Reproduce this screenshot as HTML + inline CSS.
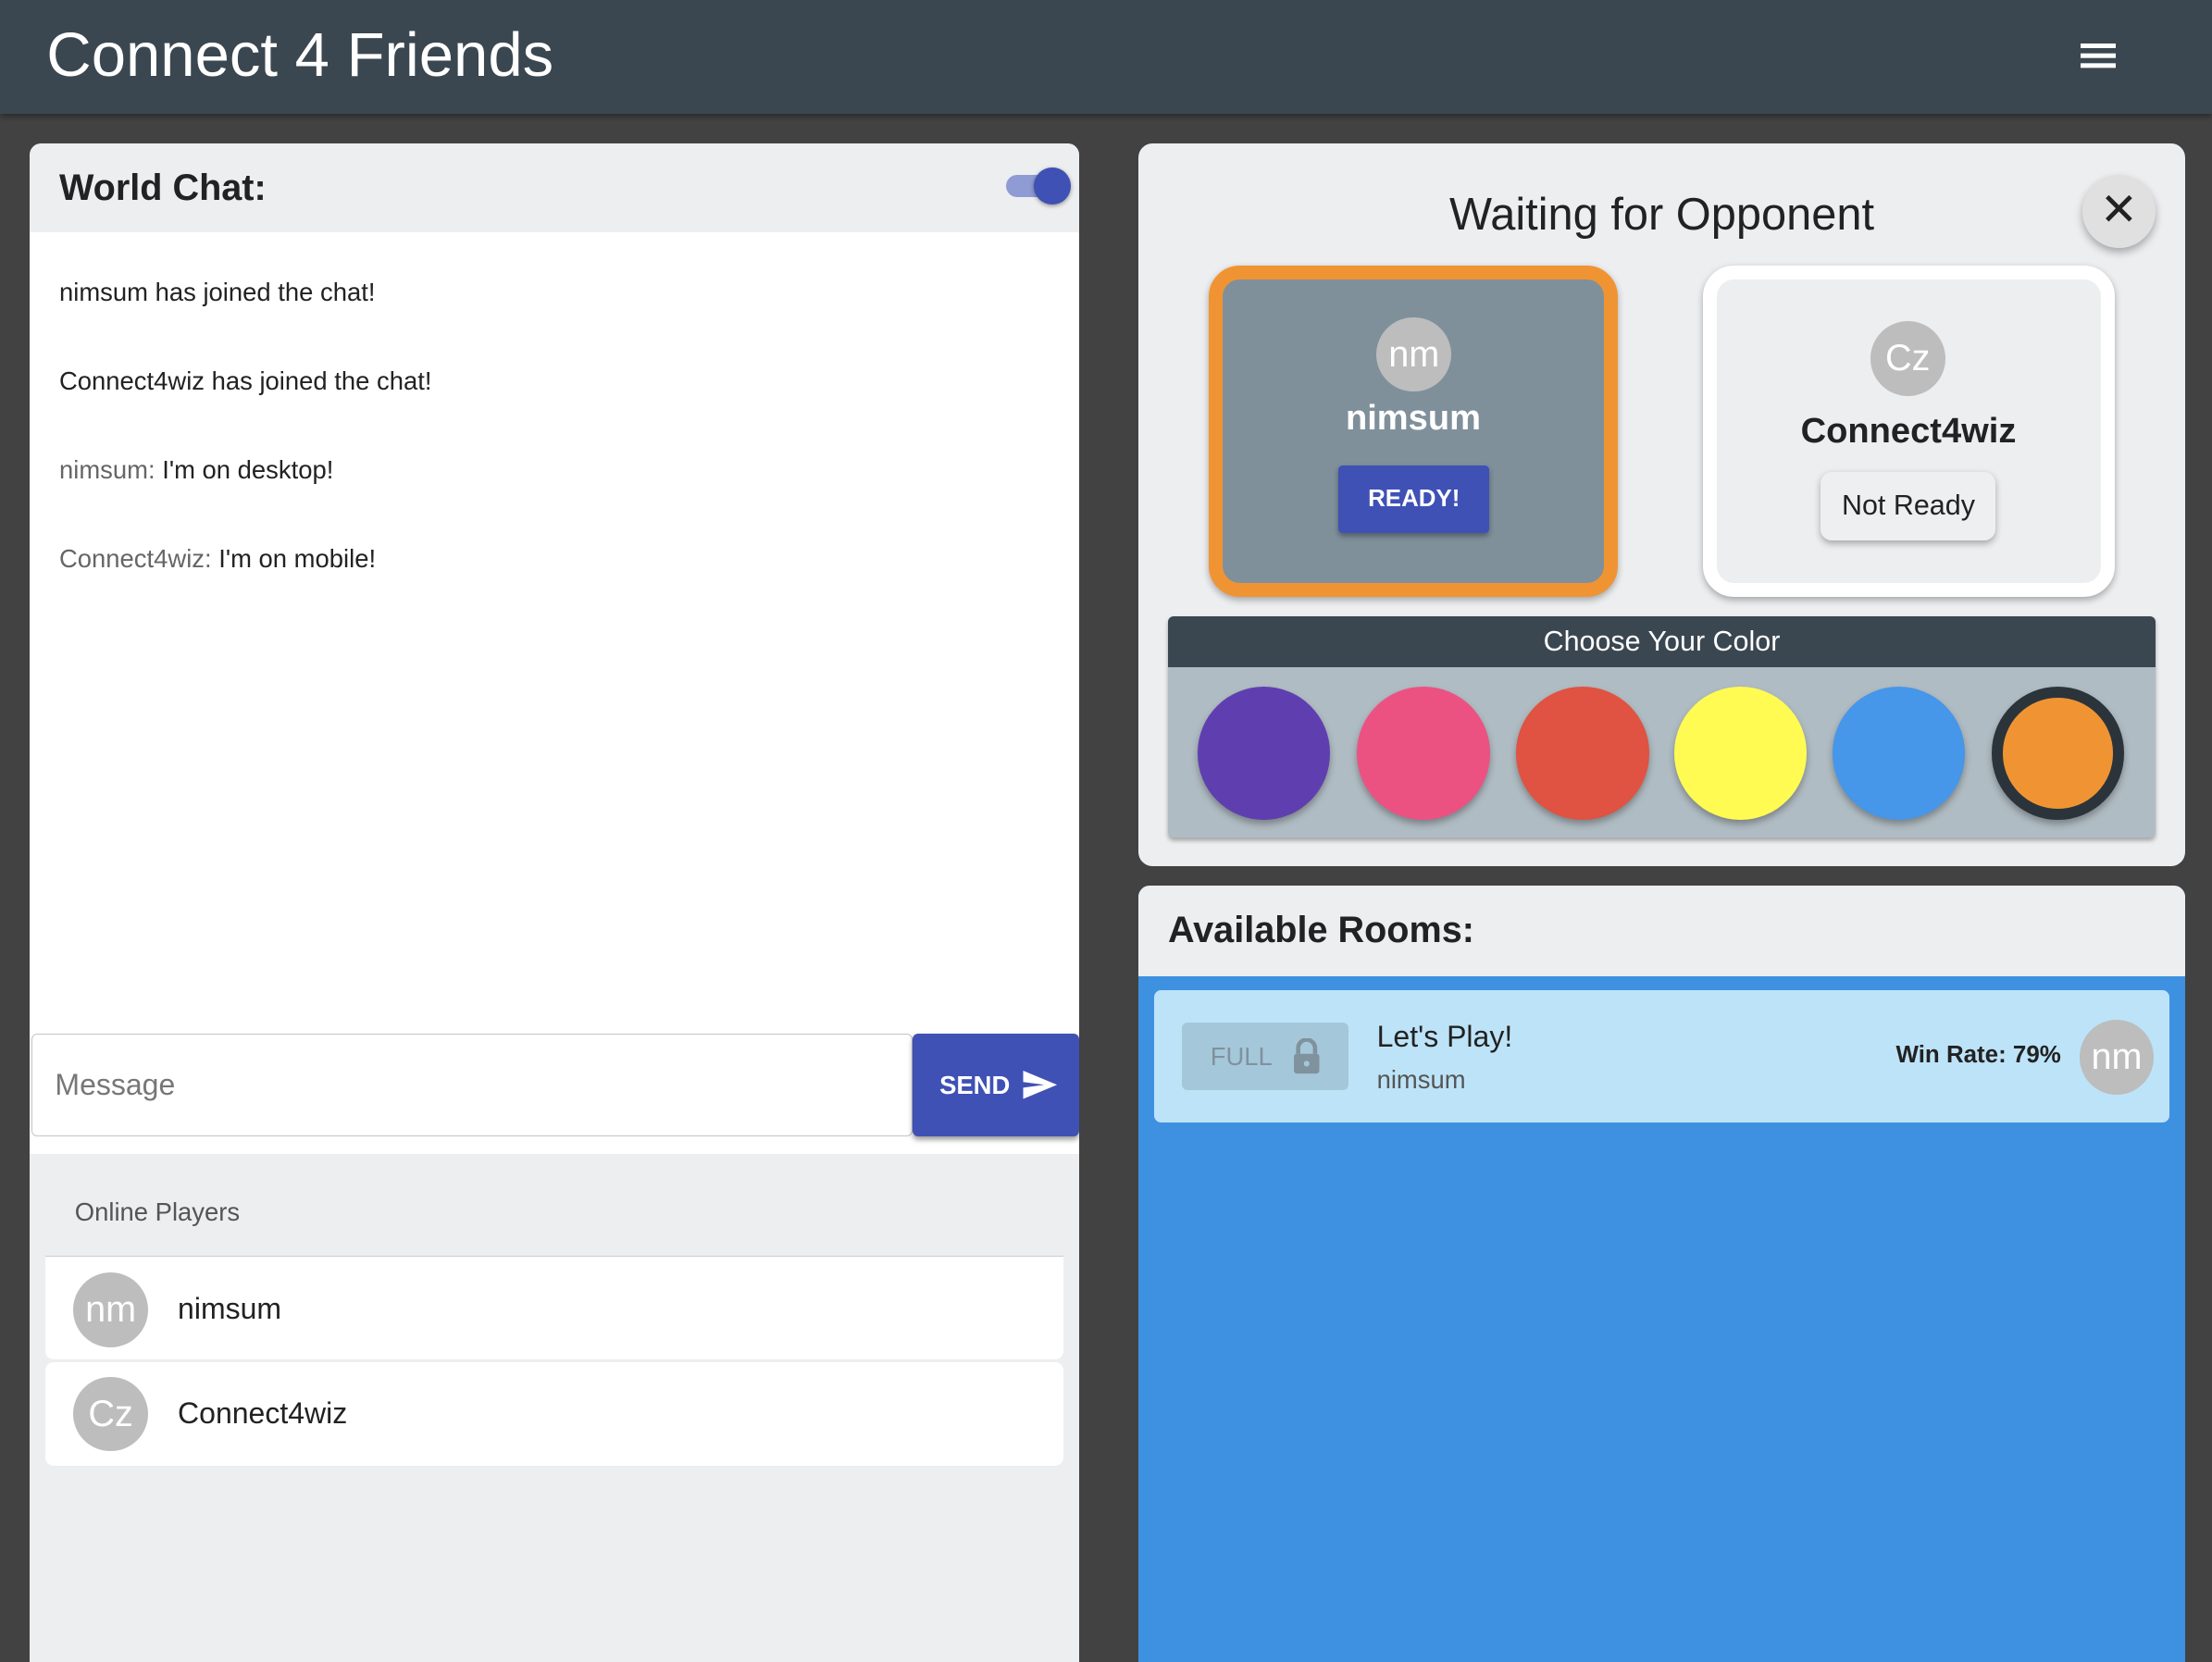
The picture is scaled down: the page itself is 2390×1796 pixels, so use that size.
<!DOCTYPE html>
<html><head><meta charset="utf-8"><style>
*{box-sizing:border-box;margin:0;padding:0}
html,body{width:2390px;height:1796px;overflow:hidden;background:#424242}
#z{zoom:1.5242;width:1568px;height:1179px;position:relative;font-family:"Liberation Sans",sans-serif;color:#222}
.a{position:absolute}
.hdr{left:0;top:0;width:1568px;height:81px;background:#3b4750;box-shadow:0 2px 4px rgba(0,0,0,.4)}
.av{position:absolute;border-radius:50%;background:#bdbdbd;color:#fff;text-align:center}
</style></head><body><div id="z">
<div class="a hdr"></div>
<div class="a" style="left:33px;top:14px;font-size:44px;color:#fff">Connect 4 Friends</div>
<div class="a" style="left:1475px;top:31px;width:25px;height:3px;background:#fff;box-shadow:0 7px 0 #fff,0 14px 0 #fff"></div>

<!-- left panel -->
<div class="a" style="left:21px;top:102px;width:744px;height:1080px;background:#edeef0;border-radius:8px 8px 0 0;overflow:hidden">
 <div class="a" style="left:21px;top:17px;font-size:26px;font-weight:bold;color:#222">World Chat:</div>
 <div class="a" style="left:692px;top:22px;width:38px;height:16px;border-radius:8px;background:#8f9bd4"></div>
 <div class="a" style="left:712px;top:17px;width:26px;height:26px;border-radius:50%;background:#3f51b5;box-shadow:0 1px 3px rgba(0,0,0,.4)"></div>
 <div class="a" style="left:0;top:63px;width:744px;height:653px;background:#fff"></div>
 <div class="a" style="left:21px;top:94px;font-size:18px;line-height:22px">nimsum has joined the chat!</div>
 <div class="a" style="left:21px;top:157px;font-size:18px;line-height:22px">Connect4wiz has joined the chat!</div>
 <div class="a" style="left:21px;top:220px;font-size:18px;line-height:22px"><span style="color:#666">nimsum:</span> I'm on desktop!</div>
 <div class="a" style="left:21px;top:283px;font-size:18px;line-height:22px"><span style="color:#666">Connect4wiz:</span> I'm on mobile!</div>
 <div class="a" style="left:1px;top:631px;width:625px;height:73px;border:1px solid #c4c4c4;border-radius:4px;background:#fff"></div>
 <div class="a" style="left:18px;top:655px;font-size:21px;color:#777">Message</div>
 <div class="a" style="left:626px;top:631px;width:118px;height:73px;background:#3f51b5;border-radius:4px;box-shadow:0 2px 4px rgba(0,0,0,.4)"></div>
 <div class="a" style="left:645px;top:657px;font-size:18px;font-weight:bold;color:#fff">SEND</div>
 <svg class="a" style="left:703px;top:655px" width="26" height="24" viewBox="0 0 26 24"><path d="M1 22 L25 12 L1 2 L1 10 L16 12 L1 14Z" fill="#fff"/></svg>
 <div class="a" style="left:32px;top:747px;font-size:18px;color:#555">Online Players</div>
 <div class="a" style="left:11px;top:788px;width:722px;height:1px;background:#ccc"></div>
 <div class="a" style="left:11px;top:789px;width:722px;height:73px;background:#fff;border-radius:0 0 6px 6px"></div>
 <div class="a" style="left:11px;top:864px;width:722px;height:73px;background:#fff;border-radius:6px"></div>
 <div class="av" style="left:31px;top:800px;width:53px;height:53px;line-height:53px;font-size:26px">nm</div>
 <div class="a" style="left:105px;top:814px;font-size:21px">nimsum</div>
 <div class="av" style="left:31px;top:874px;width:53px;height:53px;line-height:53px;font-size:26px">Cz</div>
 <div class="a" style="left:105px;top:888px;font-size:21px">Connect4wiz</div>
</div>

<!-- waiting panel -->
<div class="a" style="left:807px;top:102px;width:742px;height:512px;background:#edeef0;border-radius:10px">
 <div class="a" style="left:0;top:32px;width:742px;text-align:center;font-size:32px">Waiting for Opponent</div>
 <div class="a" style="left:669px;top:22px;width:52px;height:52px;border-radius:50%;background:#e0e0e0;box-shadow:0 3px 6px rgba(0,0,0,.3);text-align:center;line-height:50px;font-size:32px">✕</div>
 <div class="a" style="left:50px;top:86px;width:290px;height:235px;border:10px solid #f09433;border-radius:22px;background:#7f909b;box-shadow:0 2px 5px rgba(0,0,0,.3)">
  <div class="av" style="left:109px;top:27px;width:53px;height:53px;line-height:53px;font-size:26px">nm</div>
  <div class="a" style="left:0;top:85px;width:270px;text-align:center;font-size:25px;font-weight:bold;color:#fff">nimsum</div>
  <div class="a" style="left:82px;top:132px;width:107px;height:48px;background:#3f51b5;border-radius:3px;box-shadow:0 2px 4px rgba(0,0,0,.35);color:#fff;font-weight:bold;font-size:17px;text-align:center;line-height:48px">READY!</div>
 </div>
 <div class="a" style="left:400px;top:86px;width:292px;height:235px;border:10px solid #fff;border-radius:22px;background:#edeef0;box-shadow:0 2px 5px rgba(0,0,0,.3)">
  <div class="av" style="left:109px;top:30px;width:53px;height:53px;line-height:53px;font-size:26px">Cz</div>
  <div class="a" style="left:0;top:94px;width:272px;text-align:center;font-size:25px;font-weight:bold">Connect4wiz</div>
  <div class="a" style="left:74px;top:137px;width:124px;height:48px;background:#eeeff1;border-radius:8px;box-shadow:0 2px 5px rgba(0,0,0,.3);font-size:20px;text-align:center;line-height:48px">Not Ready</div>
 </div>
 <div class="a" style="left:21px;top:335px;width:700px;height:157px;background:#b0bcc3;border-radius:4px;overflow:hidden;box-shadow:0 2px 3px rgba(0,0,0,.3)">
  <div class="a" style="left:0;top:0;width:700px;height:36px;background:#3b4750;color:#fff;text-align:center;font-size:20px;line-height:36px">Choose Your Color</div>
  <div class="a" style="left:21px;top:50px;width:94px;height:94px;border-radius:50%;background:#5f3fb0;box-shadow:0 3px 5px rgba(0,0,0,.3)"></div>
  <div class="a" style="left:134px;top:50px;width:94px;height:94px;border-radius:50%;background:#eb5282;box-shadow:0 3px 5px rgba(0,0,0,.3)"></div>
  <div class="a" style="left:247px;top:50px;width:94px;height:94px;border-radius:50%;background:#e05241;box-shadow:0 3px 5px rgba(0,0,0,.3)"></div>
  <div class="a" style="left:359px;top:50px;width:94px;height:94px;border-radius:50%;background:#fffb52;box-shadow:0 3px 5px rgba(0,0,0,.3)"></div>
  <div class="a" style="left:471px;top:50px;width:94px;height:94px;border-radius:50%;background:#4696ea;box-shadow:0 3px 5px rgba(0,0,0,.3)"></div>
  <div class="a" style="left:584px;top:50px;width:94px;height:94px;border-radius:50%;background:#f09433;border:8px solid #2b343b;box-shadow:0 3px 5px rgba(0,0,0,.3)"></div>
 </div>
</div>

<!-- rooms -->
<div class="a" style="left:807px;top:628px;width:742px;height:560px;background:#3d91e0;border-radius:8px 8px 0 0;overflow:hidden">
 <div class="a" style="left:0;top:0;width:742px;height:64px;background:#edeef0"></div>
 <div class="a" style="left:21px;top:17px;font-size:26px;font-weight:bold">Available Rooms:</div>
 <div class="a" style="left:11px;top:74px;width:720px;height:94px;background:#bde3f8;border-radius:5px">
  <div class="a" style="left:20px;top:23px;width:118px;height:48px;background:#a5c7da;border-radius:4px;color:#7f929d;font-size:18px;line-height:48px;padding-left:20px">FULL</div>
  <svg class="a" style="left:97px;top:34px" width="22" height="26" viewBox="0 0 22 26"><path d="M5 11V7a6 6 0 0 1 12 0v4" fill="none" stroke="#7f929d" stroke-width="3"/><rect x="2" y="11" width="18" height="14" rx="2" fill="#7f929d"/><circle cx="11" cy="18" r="2" fill="#a5c7da"/></svg>
  <div class="a" style="left:158px;top:21px;font-size:21px">Let's Play!</div>
  <div class="a" style="left:158px;top:53px;font-size:18px;color:#555">nimsum</div>
  <div class="a" style="left:526px;top:37px;font-size:17px;font-weight:bold">Win Rate: 79%</div>
  <div class="av" style="left:656px;top:21px;width:53px;height:53px;line-height:53px;font-size:26px">nm</div>
 </div>
</div>
</div></body></html>
